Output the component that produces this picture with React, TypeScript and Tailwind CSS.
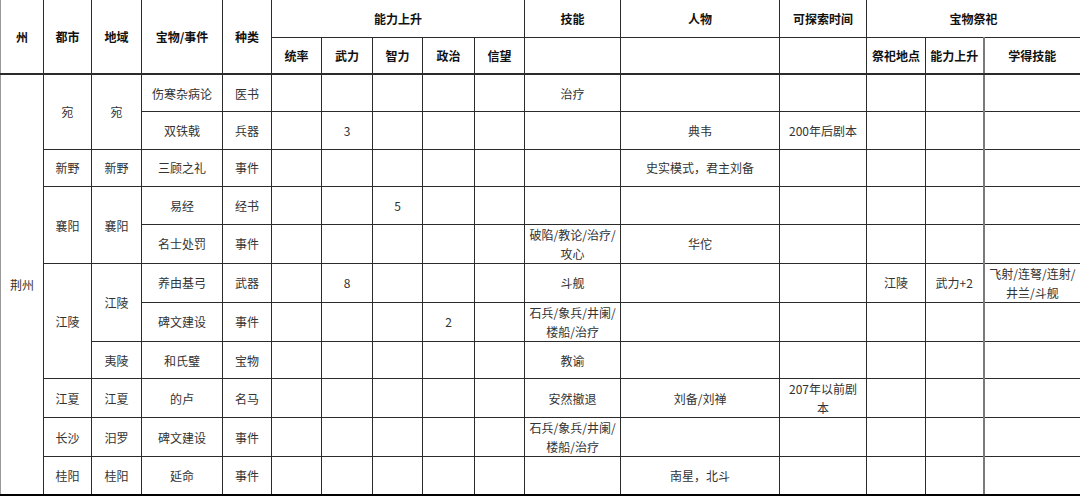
import type { ReactNode } from 'react';

type Cell = { t?: ReactNode; rs?: number };

const font = "font-['Noto_Sans_CJK_SC','Noto_Sans',sans-serif]";
const base = 'border border-[#2b2b2b] text-center align-middle p-0 leading-[19px]';

const widths = [43, 48, 50, 81, 49, 50, 51, 50, 52, 50, 96, 159, 87, 59, 58, 97];

const two = (a: string, b: string) => (
  <>
    {a}
    <br />
    {b}
  </>
);

const rows: Cell[][] = [
  [{ t: '荆州', rs: 11 }, { t: '宛', rs: 2 }, { t: '宛', rs: 2 }, { t: '伤寒杂病论' }, { t: '医书' }, {}, {}, {}, {}, {}, { t: '治疗' }, {}, {}, {}, {}, {}],
  [{ t: '双铁戟' }, { t: '兵器' }, {}, { t: '3' }, {}, {}, {}, {}, { t: '典韦' }, { t: '200年后剧本' }, {}, {}, {}],
  [{ t: '新野' }, { t: '新野' }, { t: '三顾之礼' }, { t: '事件' }, {}, {}, {}, {}, {}, {}, { t: '史实模式，君主刘备' }, {}, {}, {}, {}],
  [{ t: '襄阳', rs: 2 }, { t: '襄阳', rs: 2 }, { t: '易经' }, { t: '经书' }, {}, {}, { t: '5' }, {}, {}, {}, {}, {}, {}, {}, {}],
  [{ t: '名士处罚' }, { t: '事件' }, {}, {}, {}, {}, {}, { t: two('破陷/教论/治疗/', '攻心') }, { t: '华佗' }, {}, {}, {}, {}],
  [{ t: '江陵', rs: 3 }, { t: '江陵', rs: 2 }, { t: '养由基弓' }, { t: '武器' }, {}, { t: '8' }, {}, {}, {}, { t: '斗舰' }, {}, {}, { t: '江陵' }, { t: '武力+2' }, { t: two('飞射/连弩/连射/', '井兰/斗舰') }],
  [{ t: '碑文建设' }, { t: '事件' }, {}, {}, {}, { t: '2' }, {}, { t: two('石兵/象兵/井阑/', '楼船/治疗') }, {}, {}, {}, {}, {}],
  [{ t: '夷陵' }, { t: '和氏璧' }, { t: '宝物' }, {}, {}, {}, {}, {}, { t: '教谕' }, {}, {}, {}, {}, {}],
  [{ t: '江夏' }, { t: '江夏' }, { t: '的卢' }, { t: '名马' }, {}, {}, {}, {}, {}, { t: '安然撤退' }, { t: '刘备/刘禅' }, { t: two('207年以前剧', '本') }, {}, {}, {}],
  [{ t: '长沙' }, { t: '汨罗' }, { t: '碑文建设' }, { t: '事件' }, {}, {}, {}, {}, {}, { t: two('石兵/象兵/井阑/', '楼船/治疗') }, {}, {}, {}, {}, {}],
  [{ t: '桂阳' }, { t: '桂阳' }, { t: '延命' }, { t: '事件' }, {}, {}, {}, {}, {}, {}, { t: '南星，北斗' }, {}, {}, {}, {}],
];

export default function App() {
  const th = `${base} font-bold text-[12px] text-[#111]`;
  return (
    <div className={`w-[1080px] h-[496px] bg-white overflow-hidden ${font}`}>
      <table className="table-fixed border-collapse w-[1080px]">
        <colgroup>
          {widths.map((w, i) => (
            <col key={i} style={{ width: w }} />
          ))}
        </colgroup>
        <thead>
          <tr className="h-[37px]">
            <th rowSpan={2} className={`${th} border-t-0 border-l-[#999] border-b-2`}>州</th>
            <th rowSpan={2} className={`${th} border-t-0 border-b-2`}>都市</th>
            <th rowSpan={2} className={`${th} border-t-0 border-b-2`}>地域</th>
            <th rowSpan={2} className={`${th} border-t-0 border-b-2`}>宝物/事件</th>
            <th rowSpan={2} className={`${th} border-t-0 border-b-2`}>种类</th>
            <th colSpan={5} className={`${th} border-t-0`}>能力上升</th>
            <th className={`${th} border-t-0`}>技能</th>
            <th className={`${th} border-t-0`}>人物</th>
            <th className={`${th} border-t-0`}>可探索时间</th>
            <th colSpan={3} className={`${th} border-t-0`}>宝物祭祀</th>
          </tr>
          <tr className="h-[37px]">
            {['统率', '武力', '智力', '政治', '信望', '', '', '', '祭祀地点', '能力上升', '学得技能'].map((t, i) => (
              <th key={i} className={`${th} border-b-2 ${i === 10 ? 'border-l-2 border-l-[#7a7a7a]' : ''}`}>
                {t}
              </th>
            ))}
          </tr>
        </thead>
        <tbody>
          {rows.map((row, ri) => (
            <tr key={ri} className="h-[37.6px]">
              {row.map((c, ci) => {
                const last = ci === row.length - 1;
                const bottom = ri === rows.length - 1 || (ri === 0 && ci === 0);
                return (
                  <td
                    key={ci}
                    rowSpan={c.rs}
                    className={`${base} text-[12px] text-[#333] ${last ? 'border-l-2 border-l-[#7a7a7a]' : ''} ${bottom ? 'border-b-2 border-b-black' : ''} ${ri === 0 && ci === 0 ? 'border-l-[#999]' : ''}`}
                  >
                    {c.t}
                  </td>
                );
              })}
            </tr>
          ))}
        </tbody>
      </table>
    </div>
  );
}
